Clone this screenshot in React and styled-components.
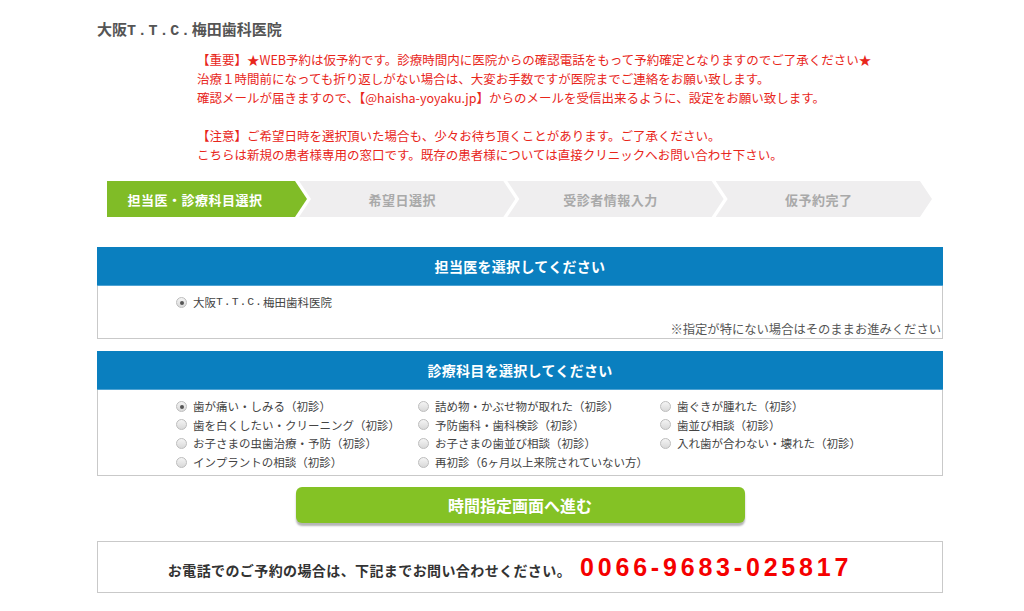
import React from "react";
import styled, { createGlobalStyle } from "styled-components";

const Global = createGlobalStyle`
  html, body { margin: 0; padding: 0; background: #fff; }
  body { font-family: "Noto Sans CJK JP", "Noto Sans", sans-serif; color: #333; }
  *, *::before, *::after { box-sizing: border-box; }
`;

const Page = styled.div`
  width: 846px;
  margin-left: 97px;
  padding-top: 19px;
  padding-bottom: 18px;
`;

const Title = styled.h1`
  margin: 0;
  height: 20px;
  font-size: 15px;
  line-height: 20px;
  font-weight: 700;
  color: #555;
`;

const Spaced = styled.span`
  font-family: "Liberation Mono", "DejaVu Sans Mono", monospace;
  letter-spacing: ${(p) => p.$ls || "0.1em"};
`;

const Notice = styled.div`
  margin-top: 11px;
  padding-left: 100px;
  font-size: 12.5px;
  color: #e8261b;
  white-space: nowrap;
`;

const NoticeLine = styled.div`
  height: 19px;
  line-height: 19px;
`;

const Steps = styled.div`
  display: flex;
  height: 36px;
  margin: 17px 11px 0 10px;
`;

const Step = styled.div`
  flex: ${(p) => (p.$first ? "0 0 200px" : "1 1 0")};
  margin-left: ${(p) => (p.$first ? "0" : "-8px")};
  background: ${(p) => (p.$active ? "#80bc27" : "#efeeef")};
  color: ${(p) => (p.$active ? "#fff" : "#a9a9a9")};
  clip-path: ${(p) =>
    p.$first
      ? "polygon(0 0, calc(100% - 12px) 0, 100% 50%, calc(100% - 12px) 100%, 0 100%)"
      : "polygon(0 0, calc(100% - 12px) 0, 100% 50%, calc(100% - 12px) 100%, 0 100%, 12px 50%)"};
  display: flex;
  align-items: center;
  justify-content: center;
  padding-right: ${(p) => (p.$first ? 24 : 10)}px;
  font-size: 13px;
  font-weight: 700;
  letter-spacing: 0.5px;
  white-space: nowrap;
`;

const Panel = styled.section`
  margin-top: ${(p) => p.$mt}px;
`;

const PanelHead = styled.div`
  height: 39px;
  line-height: 38px;
  background: #0a7fbf;
  border-bottom: 1px solid #4fa3d3;
  color: #fff;
  text-align: center;
  font-size: 14px;
  font-weight: 700;
  letter-spacing: 0.3px;
`;

const PanelBody = styled.div`
  border: 1px solid #c9c9c9;
  border-top: none;
  padding: 7px 0 ${(p) => p.$pb || 0}px 78px;
`;

const Options = styled.div`
  display: grid;
  grid-template-columns: 242px 242px 242px;
  grid-auto-rows: 18.7px;
`;

const Option = styled.label`
  display: flex;
  align-items: center;
  height: 18px;
  font-size: 11.5px;
  line-height: 18px;
  color: #444;
  white-space: nowrap;
`;

const Radio = styled.span`
  position: relative;
  width: 11px;
  height: 11px;
  border-radius: 50%;
  border: 1px solid #bdbdbd;
  background: linear-gradient(#f4f4f4, #d9d9d9);
  margin-right: 6px;
  flex: none;
  &::after {
    content: "";
    display: ${(p) => (p.$checked ? "block" : "none")};
    position: absolute;
    left: 3px;
    top: 3px;
    width: 4px;
    height: 4px;
    border-radius: 50%;
    background: #555;
  }
`;

const Note = styled.div`
  margin-top: 9px;
  height: 18px;
  text-align: right;
  font-size: 12.3px;
  line-height: 18px;
  color: #555;
  padding-right: 1px;
  white-space: nowrap;
`;

const GoButton = styled.button`
  display: block;
  width: 449px;
  height: 36px;
  margin: 11px auto 0;
  border: none;
  border-radius: 6px;
  background: #84c225;
  box-shadow: 0 3px 2px #b5b5b5;
  color: #fff;
  font-family: inherit;
  font-size: 16px;
  font-weight: 700;
  cursor: pointer;
`;

const CallBox = styled.div`
  margin-top: 18px;
  height: 52px;
  border: 1px solid #c9c9c9;
  display: flex;
  align-items: baseline;
  justify-content: center;
  padding: 11px 20px 0 0;
  gap: 9px;
`;

const CallText = styled.span`
  font-size: 14px;
  letter-spacing: 0.4px;
  font-weight: 700;
  color: #333;
`;

const Phone = styled.span`
  font-family: "Liberation Sans", Arial, sans-serif;
  font-size: 25px;
  font-weight: 700;
  letter-spacing: 3.8px;
  color: #f50000;
`;

const ClinicName = ({ ls }) => (
  <>
    大阪<Spaced $ls={ls}>T.T.C.</Spaced>梅田歯科医院
  </>
);

const notice = [
  "【重要】★WEB予約は仮予約です。診療時間内に医院からの確認電話をもって予約確定となりますのでご了承ください★",
  "治療１時間前になっても折り返しがない場合は、大変お手数ですが医院までご連絡をお願い致します。",
  "確認メールが届きますので、【@haisha-yoyaku.jp】からのメールを受信出来るように、設定をお願い致します。",
  "",
  "【注意】ご希望日時を選択頂いた場合も、少々お待ち頂くことがあります。ご了承ください。",
  "こちらは新規の患者様専用の窓口です。既存の患者様については直接クリニックへお問い合わせ下さい。",
];

const steps = ["担当医・診療科目選択", "希望日選択", "受診者情報入力", "仮予約完了"];

const treatments = [
  ["歯が痛い・しみる（初診）", true],
  ["詰め物・かぶせ物が取れた（初診）"],
  ["歯ぐきが腫れた（初診）"],
  ["歯を白くしたい・クリーニング（初診）"],
  ["予防歯科・歯科検診（初診）"],
  ["歯並び相談（初診）"],
  ["お子さまの虫歯治療・予防（初診）"],
  ["お子さまの歯並び相談（初診）"],
  ["入れ歯が合わない・壊れた（初診）"],
  ["インプラントの相談（初診）"],
  ["再初診（6ヶ月以上来院されていない方）"],
];

export default function App() {
  return (
    <>
      <Global />
      <Page>
        <Title>
          <ClinicName ls="0.12em" />
        </Title>
        <Notice>
          {notice.map((l, i) => (
            <NoticeLine key={i}>{l}</NoticeLine>
          ))}
        </Notice>
        <Steps>
          {steps.map((s, i) => (
            <Step key={s} $first={i === 0} $active={i === 0}>
              {s}
            </Step>
          ))}
        </Steps>

        <Panel $mt={30}>
          <PanelHead>担当医を選択してください</PanelHead>
          <PanelBody>
            <Option>
              <Radio $checked />
              <ClinicName ls="0.08em" />
            </Option>
            <Note>※指定が特にない場合はそのままお進みください</Note>
          </PanelBody>
        </Panel>

        <Panel $mt={12}>
          <PanelHead>診療科目を選択してください</PanelHead>
          <PanelBody $pb={3}>
            <Options>
              {treatments.map(([t, c]) => (
                <Option key={t}>
                  <Radio $checked={!!c} />
                  {t}
                </Option>
              ))}
            </Options>
          </PanelBody>
        </Panel>

        <GoButton>時間指定画面へ進む</GoButton>

        <CallBox>
          <CallText>お電話でのご予約の場合は、下記までお問い合わせください。</CallText>
          <Phone>0066-9683-025817</Phone>
        </CallBox>
      </Page>
    </>
  );
}
